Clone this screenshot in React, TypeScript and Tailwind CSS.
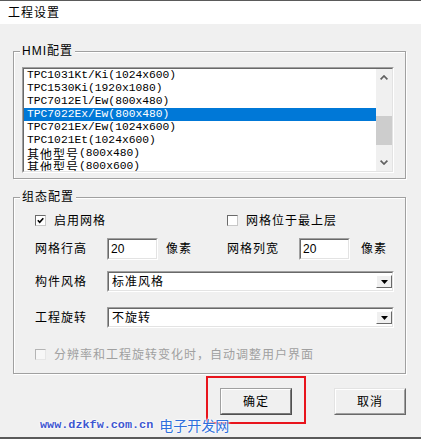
import type { ReactNode } from "react";

const items = [
  "TPC1031Kt/Ki(1024x600)",
  "TPC1530Ki(1920x1080)",
  "TPC7012El/Ew(800x480)",
  "TPC7022Ex/Ew(800x480)",
  "TPC7021Ex/Ew(1024x600)",
  "TPC1021Et(1024x600)",
  "其他型号|(800x480)",
  "其他型号|(800x600)",
];

function Sunken({ className, children }: { className: string; children?: ReactNode }) {
  return (
    <div className={`border border-t-[#a0a0a0] border-l-[#a0a0a0] border-r-white border-b-white ${className}`}>
      <div className="flex h-full border border-t-[#696969] border-l-[#696969] border-r-[#e3e3e3] border-b-[#e3e3e3] bg-white">
        {children}
      </div>
    </div>
  );
}

function CheckBox({ checked, disabled }: { checked?: boolean; disabled?: boolean }) {
  return (
    <span
      className={
        disabled
          ? "flex h-[11px] w-[11px] shrink-0 items-center justify-center border border-t-[#b4b4b4] border-l-[#b4b4b4] border-r-[#e6e6e6] border-b-[#e6e6e6] bg-[#f7f7f7]"
          : "flex h-[11px] w-[11px] shrink-0 items-center justify-center border border-t-[#6a6a6a] border-l-[#6a6a6a] border-r-[#c8c8c8] border-b-[#c8c8c8] bg-white"
      }
    >
      {checked && (
        <svg width="7" height="7" viewBox="0 0 7 7">
          <polyline points="0.8,3.3 2.7,5.3 6.3,1.2" fill="none" stroke="#000" strokeWidth="1.6" />
        </svg>
      )}
    </span>
  );
}

function Combo({ value }: { value: string }) {
  return (
    <Sunken className="h-[21px] flex-1">
      <div className="flex flex-1 items-center pl-[3px] tracking-[1px]">{value}</div>
      <div className="flex items-center">
        <div className="flex h-[13px] w-[16px] items-center justify-center border border-t-white border-l-white border-r-[#696969] border-b-[#696969] bg-[#f0f0f0]">
          <svg width="7" height="4" viewBox="0 0 7 4">
            <polygon points="0,0 7,0 3.5,4" fill="#000" />
          </svg>
        </div>
      </div>
    </Sunken>
  );
}

export default function App() {
  return (
    <div className="relative flex h-[439px] w-[421px] flex-col overflow-hidden bg-[#f0f0f0] font-['Liberation_Sans','Noto_Sans_CJK_SC',sans-serif] text-[12px] text-black">
      <div className="h-px bg-[#5a5a5a]" />
      <div className="flex h-[23px] items-center bg-white pl-[8px] tracking-[1px]">工程设置</div>

      <div className="pl-[13px] pr-[15px]">
        <fieldset className="mt-[21px] border border-[#a0a0a0] pb-[5px] shadow-[inset_1px_1px_0_#fff,1px_1px_0_#fff]">
          <legend className="ml-[6px] bg-[#f0f0f0] px-[2px] leading-[13px] tracking-[1px]">HMI配置</legend>
          <Sunken className="ml-[8px] mt-[9px] h-[106px] w-[372px]">
            <div className="flex-1 overflow-hidden font-['Liberation_Mono','Noto_Sans_CJK_SC',monospace] text-[11.3px] leading-[13px]">
              {items.map((it, i) => {
                const [cjk, rest] = it.includes("|") ? it.split("|") : ["", it];
                return (
                  <div
                    key={i}
                    className={
                      i === 3
                        ? "flex h-[13px] items-center whitespace-nowrap bg-[#0078d7] pl-[3px] text-white"
                        : "flex h-[13px] items-center whitespace-nowrap pl-[3px]"
                    }
                  >
                    {cjk && <span className="font-['Noto_Sans_CJK_SC',sans-serif] text-[12px] leading-[12px] tracking-[1px]">{cjk}</span>}
                    <span>{rest}</span>
                  </div>
                );
              })}
            </div>
            <div className="flex w-[16px] flex-col bg-[#f0f0f0]">
              <div className="flex h-[17px] items-center justify-center">
                <svg width="8" height="5" viewBox="0 0 8 5">
                  <path d="M0.6 4.4 L4 1 L7.4 4.4" fill="none" stroke="#606060" strokeWidth="1.7" />
                </svg>
              </div>
              <div className="mt-[30px] h-[29px] bg-[#cdcdcd]" />
              <div className="flex-1" />
              <div className="flex h-[17px] items-center justify-center">
                <svg width="8" height="5" viewBox="0 0 8 5">
                  <path d="M0.6 0.6 L4 4 L7.4 0.6" fill="none" stroke="#606060" strokeWidth="1.7" />
                </svg>
              </div>
            </div>
          </Sunken>
        </fieldset>

        <fieldset className="mt-[12px] border border-[#a0a0a0] pb-[12px] pl-[21px] pr-[11px] shadow-[inset_1px_1px_0_#fff,1px_1px_0_#fff]">
          <legend className="-ml-[15px] bg-[#f0f0f0] px-[2px] leading-[13px] tracking-[1px]">组态配置</legend>
          <div className="mt-[10px] flex h-[13px] items-center tracking-[1px]">
            <div className="flex w-[192px] items-center">
              <CheckBox checked />
              <span className="ml-[8px]">启用网格</span>
            </div>
            <CheckBox />
            <span className="ml-[8px]">网格位于最上层</span>
          </div>
          <div className="mt-[11px] flex h-[22px] items-center tracking-[1px]">
            <span className="w-[72px]">网格行高</span>
            <Sunken className="h-[22px] w-[51px]">
              <span className="flex items-center pl-[2px] tracking-normal">20</span>
            </Sunken>
            <span className="ml-[8px] w-[61px]">像素</span>
            <span className="w-[72px]">网格列宽</span>
            <Sunken className="h-[22px] w-[51px]">
              <span className="flex items-center pl-[2px] tracking-normal">20</span>
            </Sunken>
            <span className="ml-[11px]">像素</span>
          </div>
          <div className="mt-[11px] flex h-[21px] items-center tracking-[1px]">
            <span className="w-[72px]">构件风格</span>
            <Combo value="标准风格" />
          </div>
          <div className="mt-[15px] flex h-[21px] items-center tracking-[1px]">
            <span className="w-[72px]">工程旋转</span>
            <Combo value="不旋转" />
          </div>
          <div className="mt-[20px] flex h-[13px] items-center tracking-[1px] text-[#a0a0a0]">
            <CheckBox disabled />
            <span className="ml-[8px]">分辨率和工程旋转变化时，自动调整用户界面</span>
          </div>
        </fieldset>

        <div className="mt-[14px] flex justify-end gap-[42px] tracking-[1px]">
          <button className="h-[27px] w-[72px] border border-t-[#a0a0a0] border-l-[#a0a0a0] border-r-[#505050] border-b-[#505050] bg-[#f0f0f0]">
            <span className="flex h-full w-full items-center justify-center border border-t-white border-l-white border-r-[#7a7a7a] border-b-[#7a7a7a]">
              确定
            </span>
          </button>
          <button className="h-[27px] w-[72px] border border-t-[#e3e3e3] border-l-[#e3e3e3] border-r-[#696969] border-b-[#696969] bg-[#f0f0f0]">
            <span className="flex h-full w-full items-center justify-center border border-t-white border-l-white border-r-[#a0a0a0] border-b-[#a0a0a0]">
              取消
            </span>
          </button>
        </div>
      </div>

      <div className="flex-1" />
      <div className="h-[2px] bg-[#5a5a5a]" />

      <div className="absolute left-[206px] top-[376px] h-[48px] w-[100px] border-2 border-[#e8141c]" />
      <div className="absolute left-[40px] top-[415px] flex items-center gap-[6px] [text-shadow:0_0_2px_#fff,0_0_2px_#fff,0_0_3px_#fff]">
        <span className="font-['Liberation_Mono',monospace] text-[11.8px] font-bold text-[#3d56d0]">www.dzkfw.com.cn</span>
        <span className="font-['Noto_Sans_CJK_SC',sans-serif] text-[14px] text-[#2e6fdc]">电子开发网</span>
      </div>
    </div>
  );
}
